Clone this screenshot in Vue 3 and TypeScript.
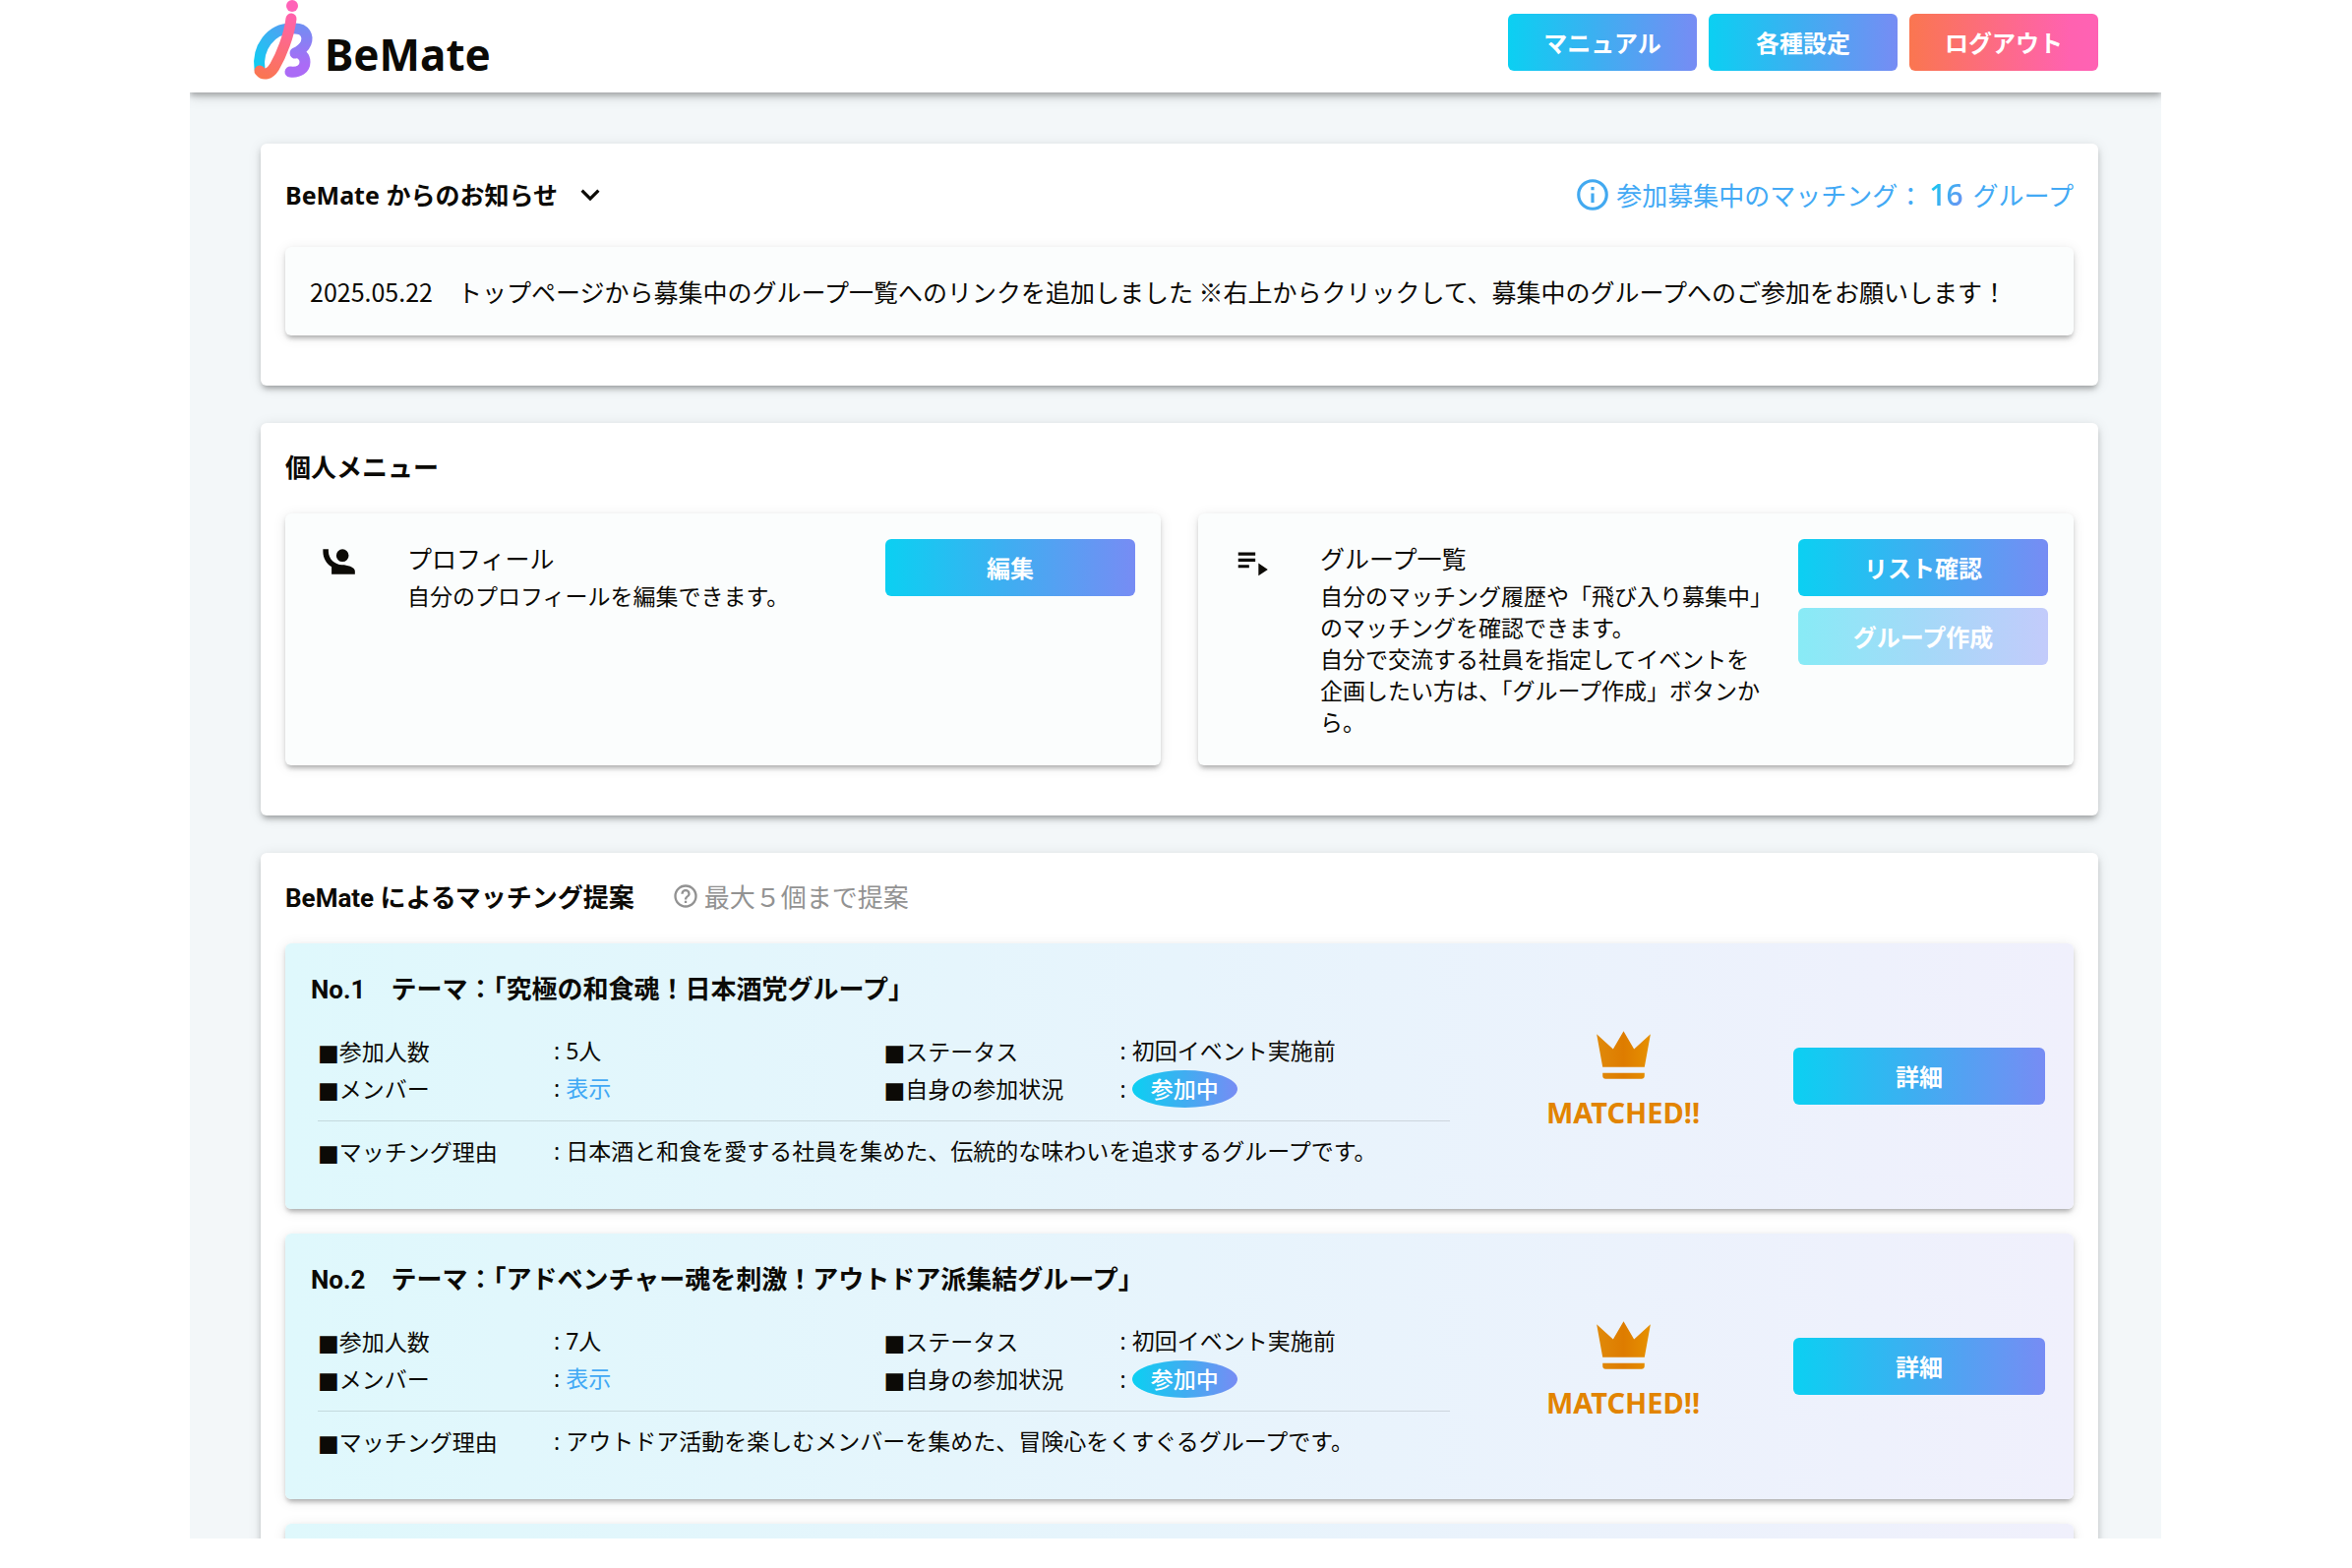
<script setup lang="ts">
interface Proposal {
  no: number
  theme: string
  members: string
  status: string
  joined: string
  reason: string
}

const proposals: Proposal[] = [
  {
    no: 1,
    theme: '究極の和食魂！日本酒党グループ',
    members: '5人',
    status: '初回イベント実施前',
    joined: '参加中',
    reason: '日本酒と和食を愛する社員を集めた、伝統的な味わいを追求するグループです。',
  },
  {
    no: 2,
    theme: 'アドベンチャー魂を刺激！アウトドア派集結グループ',
    members: '7人',
    status: '初回イベント実施前',
    joined: '参加中',
    reason: 'アウトドア活動を楽しむメンバーを集めた、冒険心をくすぐるグループです。',
  },
]
</script>

<template>
  <div class="frame">
    <header class="header">
      <a class="logo" href="#" aria-label="BeMate">
        <svg class="logo-mark" viewBox="0 0 70 90" aria-hidden="true">
          <defs>
            <linearGradient id="ring" gradientUnits="userSpaceOnUse" x1="8" y1="70" x2="52" y2="26">
              <stop offset="0" stop-color="#0bd0f2" />
              <stop offset="1" stop-color="#5f97f2" />
            </linearGradient>
            <linearGradient id="bowl" gradientUnits="userSpaceOnUse" x1="50" y1="24" x2="50" y2="66">
              <stop offset="0" stop-color="#6f8ff2" />
              <stop offset="1" stop-color="#ab6bf6" />
            </linearGradient>
            <linearGradient id="stem" gradientUnits="userSpaceOnUse" x1="44" y1="14" x2="18" y2="80">
              <stop offset="0" stop-color="#ff62ac" />
              <stop offset="1" stop-color="#fa7650" />
            </linearGradient>
          </defs>
          <g fill="none" stroke-width="11" stroke-linecap="round" stroke-linejoin="round">
            <path d="M14 70C11 49 25 29 46 29" stroke="url(#ring)" />
            <path
              d="M50 29C60 29 64 37 61 44C59 49 54 52 50 54C56 53 60 58 60 63C60 70 54 74 45 73"
              stroke="url(#bowl)"
            />
            <path d="M46 19C44 36 36 56 29 68C24 76 18 77 14 72" stroke="url(#stem)" />
          </g>
          <circle cx="47" cy="6" r="6" fill="#ff62b8" />
        </svg>
        <span class="logo-text">BeMate</span>
      </a>
      <nav class="header-nav">
        <button type="button" class="btn">マニュアル</button>
        <button type="button" class="btn">各種設定</button>
        <button type="button" class="btn btn-logout">ログアウト</button>
      </nav>
    </header>

    <main class="main">
      <section class="card">
        <div class="card-head card-head-tall">
          <h2 class="segoe">BeMate からのお知らせ</h2>
          <button type="button" class="icon-btn" aria-label="開閉">
            <svg viewBox="0 0 24 24"><path d="M7.41 8.58L12 13.17l4.59-4.59L18 10l-6 6-6-6z" /></svg>
          </button>
          <a class="recruit" href="#">
            <svg viewBox="0 0 24 24">
              <path d="M11 9h2V7h-2m1 13c-4.41 0-8-3.59-8-8s3.59-8 8-8 8 3.59 8 8-3.59 8-8 8m0-18A10 10 0 0 0 2 12a10 10 0 0 0 10 10 10 10 0 0 0 10-10A10 10 0 0 0 12 2m-1 15h2v-6h-2z" />
            </svg>
            <span>参加募集中のマッチング：</span>
            <strong>16</strong>
            <span>グループ</span>
          </a>
        </div>
        <p class="notice">
          2025.05.22　トップページから募集中のグループ一覧へのリンクを追加しました ※右上からクリックして、募集中のグループへのご参加をお願いします！
        </p>
      </section>

      <section class="card">
        <div class="card-head">
          <h2>個人メニュー</h2>
        </div>
        <div class="menu">
          <article class="panel">
            <svg class="panel-icon" viewBox="0 0 24 24" aria-hidden="true">
              <path d="M1.5 4v1.5c0 4.15 2.21 7.78 5.5 9.8V20h15v-2c0-2.66-5.33-4-8-4h-.25C9 14 5 10 5 5.500V4M14 4a4 4 0 0 0-4 4 4 4 0 0 0 4 4 4 4 0 0 0 4-4 4 4 0 0 0-4-4z" />
            </svg>
            <div class="panel-text">
              <h3>プロフィール</h3>
              <p>自分のプロフィールを編集できます。</p>
            </div>
            <div class="panel-actions">
              <button type="button" class="btn">編集</button>
            </div>
          </article>
          <article class="panel">
            <svg class="panel-icon" viewBox="0 0 24 24" aria-hidden="true">
              <path d="M3 10h11v2H3M3 6h11v2H3M3 14h7v2H3M16 13v8l6-4z" />
            </svg>
            <div class="panel-text">
              <h3>グループ一覧</h3>
              <p>自分のマッチング履歴や「飛び入り募集中」のマッチングを確認できます。</p>
              <p>自分で交流する社員を指定してイベントを企画したい方は、「グループ作成」ボタンから。</p>
            </div>
            <div class="panel-actions">
              <button type="button" class="btn">リスト確認</button>
              <button type="button" class="btn" disabled>グループ作成</button>
            </div>
          </article>
        </div>
      </section>

      <section class="card">
        <div class="card-head">
          <h2>BeMate によるマッチング提案</h2>
          <span class="hint">
            <svg viewBox="0 0 24 24" aria-hidden="true">
              <path d="M11 18h2v-2h-2v2m1-16A10 10 0 0 0 2 12a10 10 0 0 0 10 10 10 10 0 0 0 10-10A10 10 0 0 0 12 2m0 18c-4.41 0-8-3.59-8-8s3.59-8 8-8 8 3.59 8 8-3.59 8-8 8m0-14a4 4 0 0 0-4 4h2a2 2 0 0 1 2-2 2 2 0 0 1 2 2c0 2-3 1.75-3 5h2c0-2.25 3-2.5 3-5a4 4 0 0 0-4-4z" />
            </svg>
            最大５個まで提案
          </span>
        </div>
        <div class="proposals">
          <article v-for="p in proposals" :key="p.no" class="proposal">
            <div class="proposal-body">
              <h3>No.{{ p.no }}　テーマ：「{{ p.theme }}」</h3>
              <dl class="facts">
                <div><dt><i>■</i>参加人数</dt><dd>: {{ p.members }}</dd></div>
                <div><dt><i>■</i>ステータス</dt><dd>: {{ p.status }}</dd></div>
                <div><dt><i>■</i>メンバー</dt><dd>: <a href="#">表示</a></dd></div>
                <div><dt><i>■</i>自身の参加状況</dt><dd>: <span class="badge">{{ p.joined }}</span></dd></div>
              </dl>
              <dl class="facts reason">
                <div><dt><i>■</i>マッチング理由</dt><dd>: {{ p.reason }}</dd></div>
              </dl>
            </div>
            <div class="matched">
              <svg viewBox="0 0 24 24" aria-hidden="true">
                <defs>
                  <linearGradient :id="`crown-${p.no}`" x1="0" y1="0" x2="1" y2="0">
                    <stop offset="0" stop-color="#e08a0a" />
                    <stop offset="0.5" stop-color="#de7c00" />
                    <stop offset="1" stop-color="#e69100" />
                  </linearGradient>
                </defs>
                <path
                  :fill="`url(#crown-${p.no})`"
                  d="M5 16L3 5l5.500 5L12 4l3.500 6L21 5l-2 11H5m14 3c0 .6-.4 1-1 1H6c-.6 0-1-.4-1-1v-1h14z"
                />
              </svg>
              <span>MATCHED!!</span>
            </div>
            <button type="button" class="btn">詳細</button>
          </article>
          <article class="proposal"></article>
        </div>
      </section>
    </main>
  </div>
</template>

<style>
body {
  margin: 0;
  background: #fff;
}
</style>

<style scoped>
* {
  box-sizing: border-box;
}

.frame {
  height: calc(100vh - 30px);
  margin: 0 194px 0 193px;
  overflow: hidden;
  background: #f3f7f9;
  color: #0c0a06;
  font-family: "Noto Sans CJK JP", sans-serif;
  font-size: 23px;
  line-height: 38px;
}

h2,
h3,
p,
dl,
dd {
  margin: 0;
}

a {
  color: #42a9f5;
  text-decoration: none;
}

.header {
  position: relative;
  display: flex;
  justify-content: space-between;
  height: 94px;
  padding: 0 64px 0 57px;
  background: #fff;
  box-shadow: 0 3px 6px rgba(0, 0, 0, 0.28), 0 6px 12px rgba(0, 0, 0, 0.1);
}

.logo {
  display: flex;
  color: #0c0a06;
}

.logo-mark {
  width: 70px;
  height: 90px;
}

.logo-text {
  margin-left: 10px;
  padding-top: 26px;
  font-family: "Noto Sans", sans-serif;
  font-size: 44px;
  font-weight: 700;
  line-height: 58px;
}

.header-nav {
  display: flex;
  gap: 12px;
  padding-top: 14px;
}

.header-nav .btn {
  width: 192px;
}

.btn {
  width: 256px;
  height: 58px;
  padding: 0;
  border: 0;
  border-radius: 6px;
  background: linear-gradient(90deg, #0bd0f2, #40adf1 50%, #778cf4);
  color: #fff;
  font-family: inherit;
  font-size: 24px;
  font-weight: 700;
  line-height: 38px;
}

.btn:disabled {
  background: linear-gradient(90deg, #88ebf6, #a4d9f8 50%, #c3cbfb);
}

.btn-logout {
  background: linear-gradient(90deg, #fa7650, #ff62b0 85%, #ff62b4);
}

.main {
  display: flex;
  flex-direction: column;
  gap: 38px;
  padding: 52px 64px 0 72px;
}

.card {
  padding: 25px 25px 51px;
  border-radius: 6px;
  background: #fff;
  box-shadow: 0 5px 5px -3px rgba(0, 0, 0, 0.2), 0 4px 6px rgba(0, 0, 0, 0.14), 0 2px 14px rgba(0, 0, 0, 0.1);
}

.card-head {
  display: flex;
  align-items: center;
  height: 41px;
  margin-bottom: 26px;
}

.card-head-tall {
  height: 54px;
}

h2 {
  font-family: Roboto, "Noto Sans CJK JP", sans-serif;
  font-size: 26px;
  font-weight: 700;
}

h2.segoe {
  font-family: "Noto Sans", "Noto Sans CJK JP", sans-serif;
  font-size: 25px;
}

.icon-btn {
  width: 38px;
  height: 38px;
  margin-left: 14px;
  padding: 0;
  border: 0;
  background: none;
}

.icon-btn svg {
  display: block;
  fill: #0c0a06;
}

.recruit {
  display: flex;
  align-items: center;
  margin-left: auto;
  font-size: 26px;
  line-height: 36px;
}

.recruit svg {
  width: 38px;
  height: 38px;
  margin-right: 5px;
  fill: #42a9f0;
}

.recruit strong {
  margin: 0 10px 0 6px;
  background: linear-gradient(120deg, #1fc2f0 20%, #40adf1 50%, #778cf4);
  background-clip: text;
  color: transparent;
  font-family: "Open Sans", sans-serif;
  font-size: 30px;
  font-weight: 600;
}

.notice,
.panel,
.proposal {
  border-radius: 6px;
  background: #fbfdfd;
  box-shadow: 0 5px 5px -3px rgba(0, 0, 0, 0.2), 0 3px 5px rgba(0, 0, 0, 0.12), 0 2px 14px rgba(0, 0, 0, 0.09);
}

.notice {
  padding: 26px 25px;
  font-size: 25px;
}

.menu {
  display: grid;
  grid-template-columns: 1fr 1fr;
  gap: 38px;
}

.panel {
  display: flex;
  min-height: 256px;
  padding: 26px 26px 26px 36px;
}

.panel-icon {
  width: 38px;
  height: 38px;
  margin: 4px 50px 0 0;
  fill: #0c0a06;
}

.panel-text {
  flex: 1;
}

.panel-text h3 {
  margin-bottom: 3px;
  font-size: 25px;
  font-weight: 400;
  line-height: 38px;
}

.panel-text p {
  line-height: 32px;
}

.panel-actions {
  display: flex;
  flex-direction: column;
  gap: 12px;
  margin-left: 28px;
}

.panel-actions .btn {
  width: 254px;
}

.hint {
  display: flex;
  align-items: center;
  gap: 5px;
  margin-left: 38px;
  padding-bottom: 3px;
  color: #929292;
  font-size: 26px;
}

.hint svg {
  width: 28px;
  height: 28px;
  fill: #929292;
}

.proposals {
  display: flex;
  flex-direction: column;
  gap: 25px;
}

.proposal {
  display: flex;
  align-items: center;
  min-height: 270px;
  padding: 26px 29px 38px 26px;
  background: linear-gradient(90deg, #dff8fc, #e7f4fc 50%, #f0f0fc);
}

.proposal .btn {
  margin-top: 12px;
}

.proposal-body {
  flex: 1;
}

.proposal h3 {
  margin-bottom: 25px;
  font-family: Roboto, "Noto Sans CJK JP", sans-serif;
  font-size: 26px;
  font-weight: 700;
}

.facts {
  display: grid;
  grid-template-columns: 1fr 1fr;
  margin-left: 7px;
  line-height: 36px;
}

.facts div {
  display: flex;
  height: 38px;
}

.facts dt {
  width: 240px;
}

.facts dt i {
  font-family: "DejaVu Sans", sans-serif;
  font-style: normal;
  line-height: 1;
}

.facts.reason {
  grid-template-columns: 1fr;
  margin-top: 13px;
  padding-top: 12px;
  border-top: 1px solid rgba(0, 0, 0, 0.12);
}

.facts dd {
  font-family: "Noto Sans", "Noto Sans CJK JP", sans-serif;
}

.badge {
  display: inline-block;
  padding: 0 19px;
  border-radius: 50%;
  background: linear-gradient(90deg, #0bd0f2, #40adf1 50%, #778cf4);
  color: #fff;
  font-weight: 500;
  line-height: 38px;
}

.matched {
  display: flex;
  flex-direction: column;
  align-items: center;
  width: 349px;
  margin-top: 12px;
  padding-left: 3px;
  color: #e28400;
  font-family: "Noto Sans", sans-serif;
  font-size: 29px;
  font-weight: 700;
  line-height: 44px;
}

.matched svg {
  width: 73px;
  height: 73px;
}
</style>
